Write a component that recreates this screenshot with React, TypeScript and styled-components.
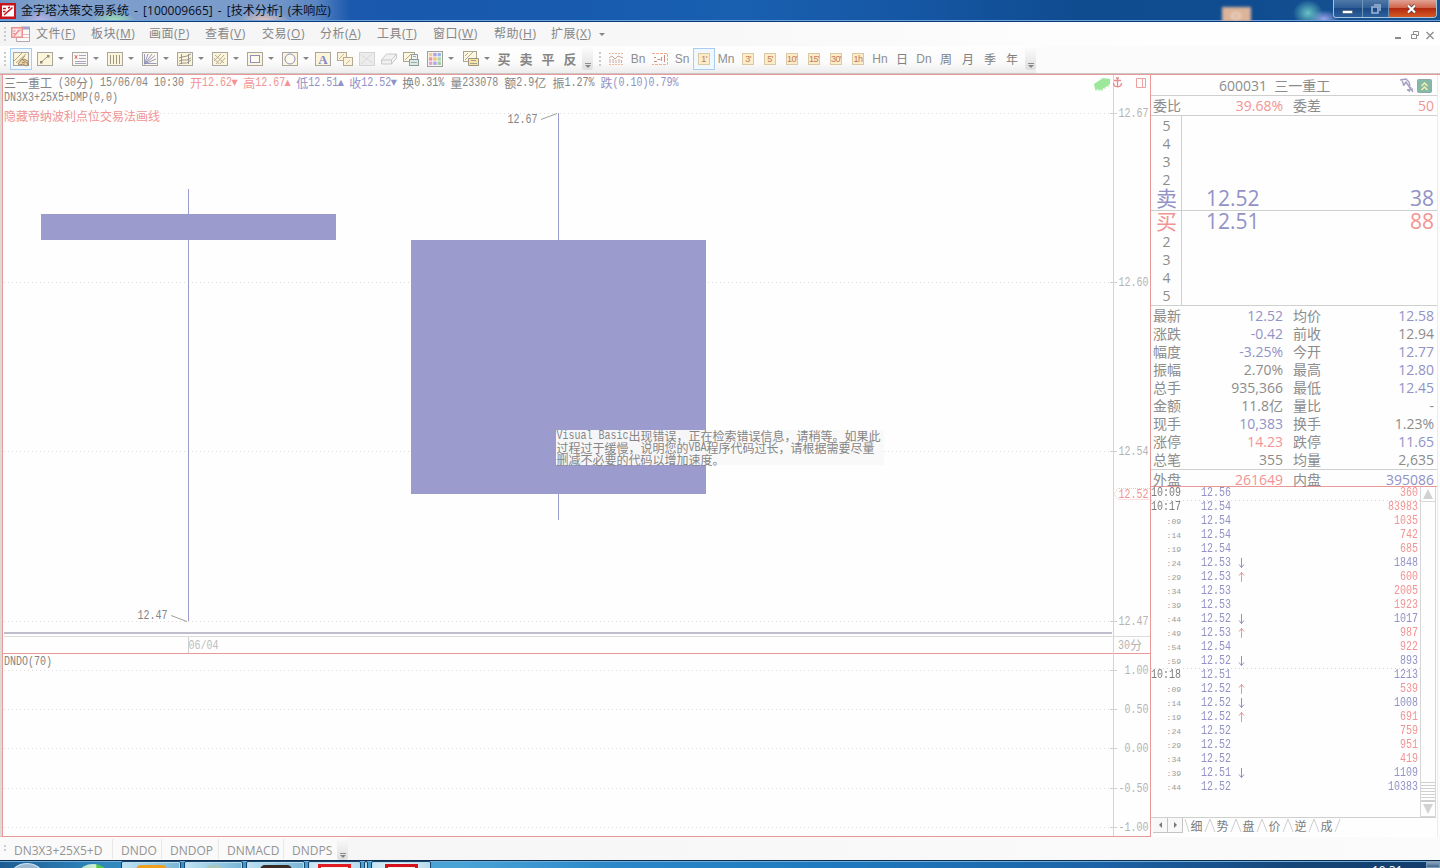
import React from "react";
import styled, { createGlobalStyle, css } from "styled-components";

const UI = `"Open Sans", "Noto Sans CJK SC", sans-serif`;
const PIX = `"Liberation Mono", "Noto Sans CJK SC", monospace`;

const C = {
  text: "#8c8c8c",
  red: "#f29494",
  blue: "#9292c6",
  candle: "#9b9bce",
  line: "#cdd0cd",
  border: "#eb9898",
};

const Global = createGlobalStyle`
  * { box-sizing: border-box; }
  body { margin: 0; background: #fdfdfd; overflow: hidden; }
`;

const Screen = styled.div`
  display: flex;
  flex-direction: column;
  width: 1440px;
  height: 868px;
  overflow: hidden;
  background: #fdfdfd;
  font-family: ${UI};
  font-size: 12px;
  color: ${C.text};
`;

/* ---------- title bar ---------- */

const TitleBar = styled.header`
  display: flex;
  height: 22px;
  flex: none;
  align-items: flex-start;
  border-bottom: 1px solid #0c3a78;
  box-shadow: inset 0 -1px 0 #6fa3dc;
  overflow: hidden;
  background:
    radial-gradient(ellipse 20px 10px at 40px 21px, rgba(200, 185, 235, 0.9), transparent),
    radial-gradient(ellipse 22px 10px at 114px 21px, rgba(165, 235, 175, 0.95), transparent),
    radial-gradient(ellipse 26px 11px at 264px 21px, rgba(240, 200, 185, 0.95), transparent),
    radial-gradient(ellipse 15px 13px at 1308px 13px, rgba(120, 215, 205, 0.85), transparent),
    radial-gradient(ellipse 15px 9px at 1324px 19px, rgba(170, 175, 245, 0.9), transparent),
    linear-gradient(90deg, #6f92c4 0, #7f9fcc 40px, #7a9ccb 260px, #5b86c2 315px, #1a59ad 350px, #175aae 560px, #1960b0 740px, #1556a3 920px, #0f4b8f 1080px, #0f4c90 1240px, #1a5490 1440px);
`;

const AppIcon = styled.svg`
  flex: none;
  margin-top: 3px;
`;

const TitleText = styled.h1`
  margin: 0 0 0 5px;
  flex: 1;
  font-size: 12px;
  font-weight: 400;
  line-height: 21px;
  word-spacing: 2px;
  color: #0a0f1c;
  white-space: pre;
`;

const OrangeGlow = styled.i`
  width: 29px;
  height: 15px;
  margin: 7px 82px 0 0;
  background: radial-gradient(ellipse 6px 5px at 14px 9px, #d8ac92 20%, #f0d8c8 60%, #dcb49a);
  filter: blur(1.6px);
`;

const WindowButtons = styled.div`
  display: flex;
  width: 104px;
  height: 18px;
  margin-right: 3px;
  border: 1px solid #a9c3dc;
  border-top: 0;
  border-radius: 0 0 4px 4px;
  overflow: hidden;
`;

const WinBtn = styled.button<{ $w: number; $close?: boolean }>`
  display: flex;
  align-items: center;
  justify-content: center;
  width: ${(p) => p.$w}px;
  padding: 0;
  border: 0;
  border-right: 1px solid ${(p) => (p.$close ? "transparent" : "#6e92b8")};
  background: ${(p) =>
    p.$close
      ? "linear-gradient(#e2a394, #d0664c 45%, #b42a10 50%, #d45a24 100%)"
      : "linear-gradient(#4f78a6, #2f5f97 45%, #1b4a86 50%, #2c619d)"};
`;

/* ---------- menu ---------- */

const MenuBar = styled.nav`
  display: flex;
  align-items: center;
  height: 24px;
  flex: none;
  background: linear-gradient(90deg, #f4f4f4, #f8f8f8 50%, #fefefe 80%);
`;

const Grip = styled.i<{ $ml?: number; $mr?: number; $h?: number }>`
  flex: none;
  width: 2px;
  height: ${(p) => p.$h ?? 14}px;
  margin: 0 ${(p) => p.$mr ?? 0}px 0 ${(p) => p.$ml ?? 0}px;
  background: repeating-linear-gradient(#cbcbcb 0 2px, transparent 2px 4px);
`;

const MenuItem = styled.a<{ $w: number }>`
  width: ${(p) => p.$w}px;
  font-size: 12px;
  line-height: 24px;
  letter-spacing: 0.5px;
  color: #868686;
  white-space: nowrap;
`;

const Caret = styled.i`
  flex: none;
  width: 0;
  height: 0;
  border: 3px solid transparent;
  border-top: 3px solid #858585;
  border-bottom: 0;
`;

const MdiButtons = styled.svg`
  margin-left: auto;
  margin-right: 5px;
`;

/* ---------- tool bar ---------- */

const ToolRow = styled.div`
  display: flex;
  height: 29px;
  flex: none;
  border-bottom: 1px solid ${C.border};
  box-shadow: inset 0 -1px 0 #c5c8c5;
  background: #fbfbfb;
`;

const ToolBar = styled.div`
  display: flex;
  align-items: center;
  height: 27px;
  padding-bottom: 2px;
  background: linear-gradient(#fefefe, #fbfbfb 60%, #ededed);
`;

const Slot = styled.button<{ $w?: number; $hot?: boolean }>`
  display: flex;
  flex: none;
  align-items: center;
  justify-content: center;
  width: ${(p) => p.$w ?? 22}px;
  height: 22px;
  padding: 0;
  border: 1px solid ${(p) => (p.$hot ? "#a9cdf0" : "transparent")};
  background: ${(p) => (p.$hot ? "#f0f7fe" : "none")};
  font: 12px/20px ${UI};
  color: #8c8c8c;
`;

const DropSlot = styled(Slot)`
  justify-content: flex-start;
  gap: 5px;
  padding-left: 4px;
`;

const BoldGlyph = styled.b`
  font-family: "Noto Sans CJK SC", sans-serif;
  font-size: 13px;
  color: #858585;
`;

const CodeGlyph = styled.span`
  font-family: "Liberation Sans", sans-serif;
  font-size: 12px;
  color: #8e8e8e;
`;

const DayGlyph = styled.span`
  font-family: "Noto Sans CJK SC", sans-serif;
  font-size: 12px;
  color: #808080;
`;

const PeriodBadge = styled.span`
  display: flex;
  align-items: center;
  justify-content: center;
  min-width: 12px;
  height: 12px;
  border: 1px solid #d9c9a4;
  background: #fdecc8;
  font: 9px/10px "Liberation Sans", sans-serif;
  letter-spacing: -0.6px;
  color: #bd7a5c;
`;

const Overflow = styled.div<{ $ml?: number }>`
  display: flex;
  flex-direction: column;
  align-items: center;
  justify-content: flex-end;
  gap: 1px;
  width: 11px;
  height: 23px;
  margin-left: ${(p) => p.$ml ?? 0}px;
  padding-bottom: 2px;
  border-radius: 0 0 3px 3px;
  background: linear-gradient(#fcfcfc, #dedede);
  &::before { content: ""; width: 6px; height: 1px; background: #8d8d8d; }
`;

/* ---------- work area ---------- */

const Work = styled.main`
  display: flex;
  flex: none;
  height: 762px;
`;

const ChartArea = styled.section`
  position: relative;
  width: 1151px;
  height: 762px;
  border-left: 2px solid #d9dcd9;
  border-right: 1px solid ${C.border};
  border-bottom: 1px solid ${C.border};
  background: #fefefe;
`;

const ChartSvg = styled.svg`
  display: block;
`;

const Legend = styled.div`
  position: absolute;
  left: 2px;
  top: 0;
  display: flex;
  flex-direction: column;
`;

const PixLine = styled.div<{ $c?: string; $lh?: number }>`
  display: flex;
  height: ${(p) => p.$lh ?? 16}px;
  line-height: ${(p) => p.$lh ?? 16}px;
  font-family: ${PIX};
  font-size: 12px;
  white-space: pre;
  color: ${(p) => p.$c ?? "#858585"};
`;

const Latin = styled.span`
  font-family: "Liberation Mono", monospace;
  font-size: 10px;
  transform: translateY(1px) scaleY(1.22);
`;

const Han = styled.span`
  font-family: "Noto Sans CJK SC", sans-serif;
  font-size: 12px;
`;

const Tri = styled.span`
  display: flex;
  flex: none;
  justify-content: center;
  width: 5px;
  font-family: "DejaVu Sans", sans-serif;
  font-size: 8px;
`;

const IndicatorName = styled.div`
  position: absolute;
  left: 2px;
  top: 579px;
`;

const Hint = styled.div`
  position: absolute;
  left: 554px;
  top: 355px;
  width: 328px;
  height: 35px;
  padding-left: 0.5px;
  background: rgba(249, 249, 249, 0.97);
`;

const splitText = (s: string) => s.match(/[▲▼]|[\x20-\x7e]+|[^\x20-\x7e▲▼]+/g) ?? [];

function Pix({ children, color, lh }: { children: string; color?: string; lh?: number }) {
  return (
    <PixLine $c={color} $lh={lh}>
      {splitText(children).map((part, i) =>
        /^[▲▼]$/.test(part) ? <Tri key={i}>{part}</Tri> : /^[\x20-\x7e]/.test(part) ? <Latin key={i}>{part}</Latin> : <Han key={i}>{part}</Han>
      )}
    </PixLine>
  );
}

const LegendRow = styled.div`
  display: flex;
`;

/* ---------- quote panel ---------- */

const Panel = styled.aside`
  display: flex;
  flex-direction: column;
  width: 287px;
  height: 763px;
  border-right: 1px solid #ececec;
  border-bottom: 1px solid #ececec;
  background: #fefefe;
  font-size: 14px;
`;

const PanelHead = styled.div`
  display: flex;
  align-items: center;
  height: 21px;
  padding: 1px 4px 0 68px;
  border-bottom: 1px solid ${C.line};
`;

const HeadName = styled.span`
  flex: 1;
  line-height: 20px;
  white-space: pre;
`;

const Quote = styled.div<{ $h?: number; $line?: string }>`
  display: grid;
  grid-template-columns: 40px 90px 38px 113px;
  padding-left: 2px;
  width: 286px;
  height: ${(p) => p.$h ?? 18}px;
  line-height: 19px;
  border-bottom: ${(p) => (p.$line ? `1px solid ${p.$line}` : "0")};
`;

const Val = styled.span<{ $c?: string }>`
  text-align: right;
  color: ${(p) => p.$c ?? C.text};
`;

const Key = styled.span<{ $second?: boolean }>`
  padding-left: ${(p) => (p.$second ? 10 : 0)}px;
  white-space: nowrap;
`;

const Ladder = styled.div`
  display: flex;
  flex-direction: column;
  border-bottom: 1px solid ${C.line};
`;

const LadderHalf = styled.div<{ $top?: boolean }>`
  height: ${(p) => (p.$top ? 95 : 94)}px;
  padding-top: 1px;
  border-bottom: ${(p) => (p.$top ? `1px solid ${C.line}` : "0")};
  background: linear-gradient(${C.line}, ${C.line}) 30px 0 / 1px 100% no-repeat;
`;

const Level = styled.div<{ $big?: boolean; $c?: string }>`
  display: flex;
  align-items: center;
  height: ${(p) => (p.$big ? 21 : 18)}px;
  padding-bottom: ${(p) => (p.$big ? 2 : 0)}px;
  font-size: ${(p) => (p.$big ? 21 : 14)}px;
  line-height: ${(p) => (p.$big ? 19 : 18)}px;
  color: ${(p) => p.$c ?? C.text};
`;

const LevelName = styled.span`
  width: 31px;
  text-align: center;
`;

const LevelPrice = styled.span`
  flex: 1;
  padding-left: 24px;
  color: ${C.blue};
`;

const LevelQty = styled.span`
  padding-right: 3px;
`;

const TickArea = styled.div`
  display: flex;
  height: 331px;
  border-bottom: 1px solid ${C.line};
  width: 285px;
`;

const TickList = styled.div`
  width: 269px;
`;

const Tick = styled.div<{ $dots?: boolean }>`
  display: grid;
  grid-template-columns: 30px 20px 36px 30px 1fr;
  height: 14px;
  padding-right: 2px;
  font: 10px/14px "Liberation Mono", monospace;
  background: ${(p) => (p.$dots ? "repeating-linear-gradient(90deg, #d4d4d4 0 1px, transparent 1px 4px) 0 100% / 100% 1px no-repeat" : "none")};
`;

const TickTime = styled.span<{ $small?: boolean }>`
  text-align: right;
  white-space: nowrap;
  color: ${(p) => (p.$small ? "#9c9c9c" : "#7d7d7d")};
  transform: scaleY(1.22);
  ${(p) => p.$small && css`font-size: 8px; transform: none;`}
`;

const TickPrice = styled.span`
  grid-column: 3;
  transform: scaleY(1.22);
  color: ${C.blue};
`;

const TickArrow = styled.svg`
  margin: 0 0 0 1px;
`;

const TickQty = styled.span<{ $c: string }>`
  grid-column: 5;
  text-align: right;
  transform: scaleY(1.22);
  color: ${(p) => p.$c};
`;

const ScrollBar = styled.div`
  display: flex;
  flex-direction: column;
  justify-content: space-between;
  width: 16px;
  border-left: 1px solid #d6d6d6;
  border-right: 1px solid #d6d6d6;
`;

const ScrollEnd = styled.div`
  display: flex;
  align-items: center;
  justify-content: center;
  height: 15px;
  border-bottom: 1px solid #d8d8d8;
`;

const ScrollFoot = styled.div`
  display: flex;
  flex-direction: column;
`;

const ScrollThumb = styled.div`
  height: 20px;
  border-bottom: 1px solid #d0d0d0;
  background: repeating-linear-gradient(#d0d0d0 0 1px, transparent 1px 3px);
`;

const SheetTabs = styled.div`
  display: flex;
  height: 17px;
  padding-left: 2px;
`;

const SheetArrow = styled.button`
  display: flex;
  align-items: center;
  justify-content: center;
  width: 15px;
  height: 15px;
  padding: 0;
  border: 0;
  border-right: 1px solid #c4c4c4;
  border-bottom: 1px solid #c4c4c4;
  background: #f8f8f8;
`;

const SheetTab = styled.span`
  display: flex;
  align-items: center;
  width: 26px;
  height: 15px;
  font: 12px/15px "Noto Sans CJK SC", sans-serif;
  color: #7c7c7c;
`;

const SheetLabel = styled.span`
  width: 13px;
  text-align: center;
`;

/* ---------- bottom bars ---------- */

const BottomTabs = styled.footer`
  display: flex;
  align-items: center;
  height: 23px;
  flex: none;
  background: linear-gradient(90deg, #fafafa 0 340px, #f6f6f6 345px, #fbfbfb);
`;

const BottomTab = styled.a<{ $w: number }>`
  width: ${(p) => p.$w}px;
  height: 20px;
  padding-left: 8px;
  border-right: 1px solid #e8e8e8;
  font: 12px/23px ${UI};
  color: #939393;
  white-space: nowrap;
  &:last-of-type { border-right: 0; }
`;

const TaskBar = styled.div`
  display: flex;
  height: 8px;
  flex: none;
  overflow: hidden;
  border-top: 1px solid #0d2c50;
  box-shadow: inset 0 1px 0 #70aeda;
  background: linear-gradient(90deg, #1d5c93, #2f86bd 100px, #4aa0cc 300px, #4aa3d6 460px, #2a86c8 620px, #1f78bd 850px, #1c62a6 1100px, #154578 1300px, #123c6a 1440px);
`;

const StartOrb = styled.i`
  width: 30px;
  height: 20px;
  margin: 2px 38px 0 12px;
  border-radius: 50%;
  border: 1px solid #d2e2ee;
  background: #9db9d0;
`;

const GreenApp = styled.i`
  width: 26px;
  height: 16px;
  margin: 3px 15px 0 0;
  border-radius: 50%;
  background: linear-gradient(90deg, #a9dcc2, #d3f1d2 60%, #55c848 65%);
`;

const Task = styled.div<{ $w: number; $glow?: boolean }>`
  display: flex;
  justify-content: center;
  width: ${(p) => p.$w}px;
  height: 20px;
  margin-right: 3px;
  border: 1px solid #16466e;
  border-radius: 2px;
  box-shadow: inset 0 0 0 1px #b9dcee;
  background: ${(p) => (p.$glow ? "linear-gradient(90deg, #c6e3f2, #eaf4f8, #b5d9eb)" : "linear-gradient(90deg, #bfe2f2, #78b6d6)")};
`;

const TaskIcon = styled.i<{ $c: string; $ring?: boolean; $w: number }>`
  width: ${(p) => p.$w}px;
  height: 20px;
  margin-top: ${(p) => (p.$ring ? 2 : 3)}px;
  border-radius: ${(p) => (p.$ring ? 0 : 5)}px;
  border: ${(p) => (p.$ring ? `3px solid ${p.$c}` : "0")};
  background: ${(p) => (p.$ring ? "#fbeeee" : p.$c)};
`;

const Clock = styled.time`
  margin-left: auto;
  width: 54px;
  padding-top: 3px;
  font: 12px/14px ${UI};
  color: #fff;
`;

const ShowDesktop = styled.i`
  width: 14px;
  border: 1px solid #7c9cba;
  background: linear-gradient(#8ba6bf, #40658c);
`;

/* ---------- tool icons ---------- */

const Frame = ({ fill = "#fdf5da" }: { fill?: string }) => <rect x="0.5" y="1.5" width="15" height="13" fill={fill} stroke="#a8a69e" />;

const icons: Record<string, React.ReactNode> = {
  draw: (<><Frame /><path d="M1 10L9 2M3 12L13 3M7 10l5-5" stroke="#b0a57c" fill="none" /><path d="M5 13l3-4 3-1 4 2v4l-2 1-3-2-3 1z" fill="#f0d3a0" stroke="#9c8a6c" /><path d="M10 9l4 3M9 11l3 1M14 12l2 3" stroke="#9c8a6c" /></>),
  line: (<><Frame /><path d="M4.500 11L11 5" stroke="#9a9388" /><path d="M3 10h2.500v2.500H3zM10 4h2.500v2.500H10z" fill="#8f897c" /></>),
  list: (<><Frame fill="#fbf7f2" /><path d="M7 4.500h7M7 7.500h7M3 10.500h11M3 12.500h11" stroke="#a6a6bc" /><path d="M2.500 4.500l3 3M5.500 4.500l-3 3M4 4v4" stroke="#e27c7c" /></>),
  bars: (<><Frame /><path d="M3.500 4v9M6.500 4v9M9.500 4v9M12.500 4v9" stroke="#9c958a" /></>),
  fan: (<><Frame fill="#fbf7ec" /><path d="M2.500 13V3M2.500 13L6 3M2.500 13L10 3M2.500 13L13 4.500M2.500 13L14 8M2.500 12.500h12" stroke="#9090b4" fill="none" strokeWidth="0.900" /></>),
  channel: (<><Frame /><path d="M4.500 3v10M11.500 3v10M2 7l3-1 5-1 4-2M2 10l4-1 4 0 4-2M2 13l4-1 4 0 4-3" stroke="#908c88" strokeWidth="0.900" fill="none" /></>),
  hatch: (<><Frame /><path d="M2 10l7-7M4 13l8-9M8 13l5-6M3 4l9 8M2 7l5 6" stroke="#b0a68e" strokeWidth="0.900" fill="none" /></>),
  rect: (<><Frame /><rect x="3.500" y="4.500" width="9" height="7" fill="#fdfaf0" stroke="#9090c0" /></>),
  circle: (<><Frame /><circle cx="8" cy="8" r="5" fill="#fdfaf0" stroke="#9090c0" /></>),
  letter: (<><Frame /><text x="8" y="13" textAnchor="middle" fontFamily="Liberation Serif" fontWeight="700" fontSize="13" fill="#8484cf">A</text></>),
  copy: (<><rect x="0.500" y="1.500" width="9" height="8" fill="#fdf3da" stroke="#b4aa94" /><rect x="6.500" y="6.500" width="9" height="8" fill="#fdf3da" stroke="#b4aa94" /><path d="M2 8l5-5M9 13l4-4" stroke="#c8b890" /></>),
  cross: (<><rect x="0.500" y="1.500" width="15" height="13" fill="#ececec" stroke="#d4d4d4" /><path d="M2 4l12 8M2 13l11-10" stroke="#dadada" /></>),
  eraser: (<path d="M0.500 9l5-6h10l-5 6zM0.500 9v4h10V9M10.500 13l5-6V3" fill="#f1f1f1" stroke="#c8c8c8" />),
  lock: (<><rect x="0.500" y="1.500" width="11" height="9" fill="#fdf6e0" stroke="#aaa58e" /><path d="M2 9l6-6" stroke="#b5ad8a" /><rect x="6.500" y="8.500" width="9" height="6" fill="#dfe6e6" stroke="#8c9c9c" /><path d="M8.500 8V3.500h6V8" stroke="#8c9c9c" fill="#eef2f0" /><path d="M10 5.500h3M8 11.500h6" stroke="#92b4a4" /></>),
  palette: (<><rect x="0.500" y="0.500" width="15" height="15" fill="#f6f4ee" stroke="#a0a0a0" />
    {["#f0cf9c", "#b0a0e8", "#98b8e8", "#e89898", "#f0c080", "#a8d8a8", "#e8a0d8", "#a8a8e8", "#a0d0a0"].map((c, i) => <rect key={i} x={2 + (i % 3) * 4.3} y={2 + Math.floor(i / 3) * 4.3} width="3.300" height="3.300" fill={c} />)}</>),
  save: (<><rect x="0.500" y="0.500" width="13" height="10" fill="#fdf6e0" stroke="#aaa58e" /><path d="M2 9l8-8M2 5l3-3" stroke="#b5ad8a" /><path d="M5.500 7.500h10v7h-10z" fill="#fbe39c" stroke="#98948a" /><path d="M7 12.500h7M8 9.500h5" stroke="#a0a09a" /></>),
  wave: (<><path d="M1 2.500h14M1 13.500h14" stroke="#ecb898" strokeDasharray="2 1" /><path d="M1 7l3-2 3 3 3-3 5 2M2 12V8M5 12V8M8 12V9M11 12V8M13.500 12V9" stroke="#c9a89a" fill="none" /></>),
  kline: (<><path d="M0 2.500h15.500v11H0" stroke="#ecb090" fill="none" strokeDasharray="3 1" /><path d="M2 10.500h3M5.500 8.500h3M9.500 6v4M12.500 4v7M2 6.500h2" stroke="#d08c80" /></>),
};

const Icon = ({ name }: { name: string }) => (
  <svg width="16" height="16" viewBox="0 0 16 16">{icons[name]}</svg>
);

const Logo = () => (
  <AppIcon width="16" height="16" viewBox="0 0 16 16">
    <rect width="16" height="16" fill="#c9141c" />
    <rect x="2" y="2.500" width="12" height="11" fill="#fff" />
    <path d="M3 5.500h3M3 8.500h2.500M4 12L9 7.500M7.500 9L12.500 4.500M8 5l2-1" stroke="#c9141c" strokeWidth="1.500" fill="none" />
  </AppIcon>
);

const MdiIcon = styled.svg`
  flex: none;
  margin: 0 6px 0 2px;
`;

/* ---------- data ---------- */

const menus: [string, string, number][] = [
  ["文件", "F", 55], ["板块", "M", 58], ["画面", "P", 56], ["查看", "V", 57], ["交易", "O", 58],
  ["分析", "A", 57], ["工具", "T", 56], ["窗口", "W", 61], ["帮助", "H", 57], ["扩展", "X", 48],
];

const dropTools = ["line", "list", "bars", "fan", "channel", "hatch", "rect", "circle"];
const plainTools = ["letter", "copy", "cross", "eraser", "lock"];

const { red: R, blue: B } = C;

const stats: [string, string, string | undefined, string, string, string | undefined][] = [
  ["最新", "12.52", B, "均价", "12.58", B],
  ["涨跌", "-0.42", B, "前收", "12.94", undefined],
  ["幅度", "-3.25%", B, "今开", "12.77", B],
  ["振幅", "2.70%", undefined, "最高", "12.80", B],
  ["总手", "935,366", undefined, "最低", "12.45", B],
  ["金额", "11.8亿", undefined, "量比", "-", undefined],
  ["现手", "10,383", B, "换手", "1.23%", undefined],
  ["涨停", "14.23", R, "跌停", "11.65", B],
  ["总笔", "355", undefined, "均量", "2,635", undefined],
];

const ticks: [string, string, string, string, string][] = [
  ["10:09", "12.56", "", "360", R], ["10:17", "12.54", "", "83983", R], [":09", "12.54", "", "1035", R],
  [":14", "12.54", "", "742", R], [":19", "12.54", "", "685", R], [":24", "12.53", "d", "1848", B],
  [":29", "12.53", "u", "600", R], [":34", "12.53", "", "2005", R], [":39", "12.53", "", "1923", R],
  [":44", "12.52", "d", "1017", B], [":49", "12.53", "u", "987", R], [":54", "12.54", "", "922", R],
  [":59", "12.52", "d", "893", B], ["10:18", "12.51", "", "1213", B], [":09", "12.52", "u", "539", R],
  [":14", "12.52", "d", "1008", B], [":19", "12.52", "u", "691", R], [":24", "12.52", "", "759", R],
  [":29", "12.52", "", "951", R], [":34", "12.52", "", "419", R], [":39", "12.51", "d", "1109", B],
  [":44", "12.52", "", "10383", B],
];

const priceLines: [number, string][] = [[38.5, "12.67"], [207.5, "12.60"], [376.5, "12.54"], [546.5, "12.47"]];
const dndoLines: [number, string][] = [[595.5, "1.00"], [634.5, "0.50"], [673.5, "0.00"], [713.5, "-0.50"], [752.5, "-1.00"]];

function Label({ x, y, fill, end, children }: { x: number; y: number; fill: string; end?: boolean; children: string }) {
  return (
    <text
      transform={`translate(${x} ${y}) scale(1 1.22)`}
      textAnchor={end ? "end" : "start"}
      fontFamily="Liberation Mono"
      fontSize="10"
      fill={fill}
    >
      {children}
    </text>
  );
}

function Chart() {
  return (
    <ChartSvg width="1148" height="761" viewBox="2 0 1148 761">
      <path d="M2.500 0V761M3 578.500H1150" stroke={C.border} />
      {[...priceLines, ...dndoLines].map(([y, label]) => (
        <g key={y}>
          <path d={`M4 ${y}H1110`} stroke="#dcdcdc" strokeDasharray="1 3" />
          <path d={`M1110 ${y}H1117`} stroke="#d0d0d0" />
          <Label x={1148.5} y={y + 3.5} end fill="#b4b4b4">{label}</Label>
        </g>
      ))}
      <path d="M1113.500 0V761" stroke="#d2d5d2" />
      <path d="M1110 561.500H1150M4 561.500H1112" stroke="#dcdcdc" />
      <path d="M4 558H1112" stroke="#a9a9bd" strokeWidth="1.500" />
      <path d="M188.500 562V578" stroke="#d0d0d0" />
      <Label x={188.5} y={574} fill="#bdbdbd">06/04</Label>
      <Label x={1118} y={574} fill="#b4b4b4">30</Label>
      <text x="1130" y="574.500" fontFamily="Noto Sans CJK SC" fontSize="12" fill="#b4b4b4">分</text>
      <path d="M188.500 114V546M558.500 38V445" stroke={C.candle} />
      <rect x="41" y="139" width="295" height="26" fill={C.candle} />
      <rect x="411" y="165" width="295" height="254" fill={C.candle} />
      <Label x={507.5} y={48} fill="#858585">12.67</Label>
      <path d="M541 44.500L557 38.500M171 540.500L187 546.500" stroke="#a0a0a0" />
      <Label x={137.5} y={544} fill="#858585">12.47</Label>
      <path d="M1150 413.500H1118L1114 419L1118 424.500H1150" fill="none" stroke="#efc4c4" strokeDasharray="1 1" />
      <Label x={1148.5} y={422.5} end fill={C.red}>12.52</Label>
      <path d="M1094 9l9-6 7 1v5l-9 6-6-1z" fill="#9be89b" />
      <path d="M1096 14v2M1099 15v1M1102 14v2M1105 12v2M1108 10v2" stroke="#9be89b" />
      <path d="M1117.500 3v9M1114 5.500h7M1113.500 8c0 5 8 5 8 0M1116 3h3" stroke="#e88c8c" strokeWidth="1.300" fill="none" />
      <path d="M1136.500 3.500h9v9h-9zM1142.500 3.500v9" stroke="#eda0a0" fill="none" />
    </ChartSvg>
  );
}

function DropTool({ name, w = 35 }: { name: string; w?: number }) {
  return <DropSlot $w={w}><Icon name={name} /><Caret /></DropSlot>;
}

export default function App() {
  return (
    <Screen>
      <Global />
      <TitleBar>
        <Logo />
        <TitleText>金字塔决策交易系统 - [100009665] - [技术分析] (未响应)</TitleText>
        <OrangeGlow />
        <WindowButtons>
          <WinBtn $w={29}><svg width="12" height="12"><rect x="0.500" y="7.500" width="10" height="3" fill="#fff" stroke="#43566e" strokeWidth="0.600" /></svg></WinBtn>
          <WinBtn $w={27}><svg width="12" height="12"><path d="M4 2h6v6M2 4h6v6H2z" fill="none" stroke="#9eb4d2" strokeWidth="1.600" /></svg></WinBtn>
          <WinBtn $w={47} $close><svg width="12" height="12"><path d="M2 2.500l7 7M9 2.500l-7 7" stroke="#5c3a3a" strokeWidth="3.600" /><path d="M2 2.500l7 7M9 2.500l-7 7" stroke="#fff" strokeWidth="2.200" /></svg></WinBtn>
        </WindowButtons>
      </TitleBar>

      <MenuBar>
        <Grip $ml={4} $mr={3} />
        <MdiIcon width="19" height="18" viewBox="0 0 19 18">
          <path d="M5 3.500h13.500v13h-13z" fill="#fafafa" stroke="#b2a6b0" />
          <path d="M10 1.500h9v3h-9z" fill="#a3a3cc" />
          <rect x="0" y="2" width="12" height="11" fill="#eb8f8f" />
          <rect x="1.500" y="3.500" width="9" height="8" fill="#fbe9e9" />
          <path d="M2 6h2.500M2 8.500h2M3 11l5-5.500M6.500 5.500L10 5" stroke="#e88a8a" strokeWidth="1.200" />
          <path d="M12 9.500h6M12 12.500h6" stroke="#e4b8b8" />
        </MdiIcon>
        {menus.map(([name, key, w]) => <MenuItem key={key} $w={w}>{name}(<u>{key}</u>)</MenuItem>)}
        <Caret />
        <MdiButtons width="42" height="14" viewBox="0 0 42 14">
          <path d="M2 11h6" stroke="#8c8c8c" strokeWidth="2" />
          <path d="M18.500 7.500h5v4h-5zM20.500 7V4.500h5v4H24" stroke="#8c8c8c" fill="none" />
          <path d="M33.500 5l7 7M40.500 5l-7 7" stroke="#8c8c8c" strokeWidth="1.300" />
        </MdiButtons>
      </MenuBar>

      <ToolRow>
        <ToolBar>
          <Grip $ml={4} $mr={4} $h={14} />
          <Slot $hot><Icon name="draw" /></Slot>
          {dropTools.map((n) => <DropTool key={n} name={n} />)}
          {plainTools.map((n) => <Slot key={n}><Icon name={n} /></Slot>)}
          <DropTool name="palette" w={36} />
          <DropTool name="save" />
          {["买", "卖", "平", "反"].map((t) => <Slot key={t}><BoldGlyph>{t}</BoldGlyph></Slot>)}
          <Overflow $ml={1}><Caret /></Overflow>
        </ToolBar>
        <ToolBar>
          <Grip $ml={6} $mr={4} $h={14} />
          <Slot><Icon name="wave" /></Slot>
          <Slot><CodeGlyph>Bn</CodeGlyph></Slot>
          <Slot><Icon name="kline" /></Slot>
          <Slot><CodeGlyph>Sn</CodeGlyph></Slot>
          <Slot $hot><PeriodBadge>1'</PeriodBadge></Slot>
          <Slot><CodeGlyph>Mn</CodeGlyph></Slot>
          {["3'", "5'", "10'", "15'", "30'", "1h"].map((t) => <Slot key={t}><PeriodBadge>{t}</PeriodBadge></Slot>)}
          <Slot><CodeGlyph>Hn</CodeGlyph></Slot>
          <Slot><DayGlyph>日</DayGlyph></Slot>
          <Slot><CodeGlyph>Dn</CodeGlyph></Slot>
          {["周", "月", "季", "年"].map((t) => <Slot key={t}><DayGlyph>{t}</DayGlyph></Slot>)}
          <Overflow $ml={2}><Caret /></Overflow>
        </ToolBar>
      </ToolRow>

      <Work>
        <ChartArea>
          <Chart />
          <Legend>
            <LegendRow>
              <Pix>{"三一重工 (30分) 15/06/04 10:30 "}</Pix>
              <Pix color={R}>{"开12.62▼ 高12.67▲ "}</Pix>
              <Pix color={B}>{"低12.51▲ 收12.52▼ "}</Pix>
              <Pix>{"换0.31% 量233078 额2.9亿 振1.27% "}</Pix>
              <Pix color={B}>跌(0.10)0.79%</Pix>
            </LegendRow>
            <Pix lh={14}>DN3X3+25X5+DMP(0,0)</Pix>
            <Pix color={R} lh={21}>隐藏帝纳波利点位交易法画线</Pix>
          </Legend>
          <IndicatorName><Pix>DNDO(70)</Pix></IndicatorName>
          <Hint>
            <Pix lh={12}>Visual Basic出现错误，正在检索错误信息，请稍等。如果此</Pix>
            <Pix lh={12}>过程过于缓慢，说明您的VBA程序代码过长，请根据需要尽量</Pix>
            <Pix lh={12}>删减不必要的代码以增加速度。</Pix>
          </Hint>
        </ChartArea>

        <Panel>
          <PanelHead>
            <HeadName>600031  三一重工</HeadName>
            <svg width="34" height="16" viewBox="0 0 34 16">
              <path d="M1 2l6-1 3 3 1 4M3 2l2 6M5 7l2-3 4 6M10 8l4 6M8 12l6-1M10 14l2-5" stroke="#a8a0c4" strokeWidth="1.400" fill="none" />
              <rect x="18.500" y="1.500" width="14" height="13" rx="1" fill="#86b8a8" stroke="#8cacae" />
              <path d="M22.500 8l3-3 3 3M22.500 12l3-3 3 3" stroke="#f2f2a8" strokeWidth="1.500" fill="none" />
            </svg>
          </PanelHead>
          <Quote $h={20} $line={C.line}>
            <Key>委比</Key><Val $c={R}>39.68%</Val><Key $second>委差</Key><Val $c={R}>50</Val>
          </Quote>
          <Ladder>
            <LadderHalf $top>
              {["5", "4", "3", "2"].map((n) => <Level key={n}><LevelName>{n}</LevelName></Level>)}
              <Level $big $c={B}><LevelName>卖</LevelName><LevelPrice>12.52</LevelPrice><LevelQty>38</LevelQty></Level>
            </LadderHalf>
            <LadderHalf>
              <Level $big $c={R}><LevelName>买</LevelName><LevelPrice>12.51</LevelPrice><LevelQty>88</LevelQty></Level>
              {["2", "3", "4", "5"].map((n) => <Level key={n}><LevelName>{n}</LevelName></Level>)}
            </LadderHalf>
          </Ladder>
          {stats.map(([k1, v1, c1, k2, v2, c2], i) => (
            <Quote key={k1} $h={i === 8 ? 20 : 18} $line={i === 8 ? C.line : undefined}>
              <Key>{k1}</Key><Val $c={c1}>{v1}</Val><Key $second>{k2}</Key><Val $c={c2}>{v2}</Val>
            </Quote>
          ))}
          <Quote $h={17} $line={C.border}>
            <Key>外盘</Key><Val $c={R}>261649</Val><Key $second>内盘</Key><Val $c={B}>395086</Val>
          </Quote>
          <TickArea>
            <TickList>
              {ticks.map(([t, p, a, q, c], i) => (
                <Tick key={i} $dots={i === 0 || i === 12}>
                  <TickTime $small={t.length < 5}>{t}</TickTime>
                  <TickPrice>{p}</TickPrice>
                  {a ? (
                    <TickArrow width="8" height="12" viewBox="0 0 8 12">
                      <path d={a === "d" ? "M3.500 1V11M1 7.500L3.500 10.500L6 7.500" : "M3.500 1V11M1 4.500L3.500 1.500L6 4.500"} fill="none" stroke={a === "d" ? B : R} />
                    </TickArrow>
                  ) : <span />}
                  <TickQty $c={c}>{q}</TickQty>
                </Tick>
              ))}
            </TickList>
            <ScrollBar>
              <ScrollEnd><svg width="12" height="10"><path d="M1 10L6 0L11 10z" fill="#d2d2d2" /></svg></ScrollEnd>
              <ScrollFoot>
                <ScrollThumb />
                <ScrollEnd><svg width="12" height="10"><path d="M1 0L6 10L11 0z" fill="#d2d2d2" /></svg></ScrollEnd>
              </ScrollFoot>
            </ScrollBar>
          </TickArea>
          <SheetTabs>
            <SheetArrow><svg width="5" height="6"><path d="M4 0L1 3L4 6z" fill="#777" /></svg></SheetArrow>
            <SheetArrow><svg width="5" height="6"><path d="M1 0L4 3L1 6z" fill="#777" /></svg></SheetArrow>
            <svg width="7" height="15"><path d="M2 1L6 14" stroke="#cfcfcf" /></svg>
            {["细", "势", "盘", "价", "逆", "成"].map((t, i) => (
              <SheetTab key={t}>
                <SheetLabel>{t}</SheetLabel>
                <svg width="13" height="15"><path d={i === 5 ? "M2 14L7 1" : "M2 14L7 1L12 14"} stroke="#cfcfcf" fill="none" /></svg>
              </SheetTab>
            ))}
          </SheetTabs>
        </Panel>
      </Work>

      <BottomTabs>
        <Grip $ml={4} $h={8} />
        <BottomTab $w={107}>DN3X3+25X5+D</BottomTab>
        <BottomTab $w={49}>DNDO</BottomTab>
        <BottomTab $w={57}>DNDOP</BottomTab>
        <BottomTab $w={65}>DNMACD</BottomTab>
        <BottomTab $w={53}>DNDPS</BottomTab>
        <Overflow><Caret /></Overflow>
      </BottomTabs>

      <TaskBar>
        <StartOrb />
        <GreenApp />
        <Task $w={60}><TaskIcon $c="#f0a01c" $w={31} /></Task>
        <Task $w={59}><TaskIcon $c="#a8c8bc" $w={16} /></Task>
        <Task $w={59}><TaskIcon $c="#3a2c24" $w={32} /></Task>
        <Task $w={53} $glow><TaskIcon $c="#e01c24" $w={33} $ring /></Task>
        <Task $w={4} />
        <Task $w={60} $glow><TaskIcon $c="#d4141c" $w={33} $ring /></Task>
        <Clock>10:31</Clock>
        <ShowDesktop />
      </TaskBar>
    </Screen>
  );
}
